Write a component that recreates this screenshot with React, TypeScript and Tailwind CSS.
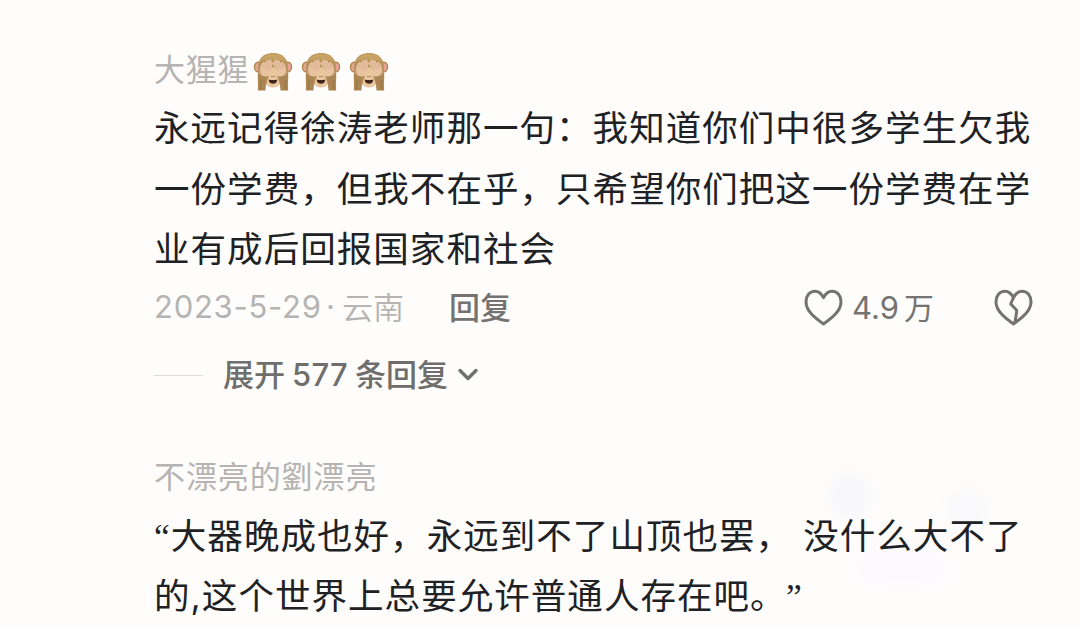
import type { ReactNode } from "react"

function Monkey() {
  return (
    <svg viewBox="0 0 40 40" className="h-10 w-10 shrink-0" aria-label="🙈">
      <ellipse cx="5.200" cy="15" rx="4.400" ry="5.600" fill="#a9824f" />
      <ellipse cx="34.800" cy="15" rx="4.400" ry="5.600" fill="#a9824f" />
      <ellipse cx="5" cy="15.200" rx="2.900" ry="4.100" fill="#e6a593" />
      <ellipse cx="35" cy="15.200" rx="2.900" ry="4.100" fill="#e6a593" />
      <path d="M20 1C10.500 1 5 7 5 15c0 7 4 13 7 16h16c3-3 7-9 7-16C35 7 29.500 1 20 1z" fill="#b8935a" />
      <path d="M20 1.500C13.500 1.500 9 4.500 7 9.500c8-3 18-3 26 0-2-5-6.500-8-13-8z" fill="#c6a267" />
      <path d="M20 15c-5 3-8 8-8 12.500 0 5 3.500 8 8 8s8-3 8-8C28 23 25 18 20 15z" fill="#e9c69e" />
      <path d="M15.700 27.500c2.500.7 6.100.7 8.600 0-.3 3-1.900 4.300-4.300 4.300s-4-1.300-4.300-4.300z" fill="#3f2419" />
      <path d="M18.400 24.500h.9M20.700 24.500h.9" stroke="#a77a55" strokeWidth="1" strokeLinecap="round" />
      <path d="M5 19c1 5 7 7.500 11 4.500-2 4.500-3.300 9-3.500 15H4.800C5.600 33 4.200 26 5 19z" fill="#ab8654" />
      <path d="M35 19c-1 5-7 7.500-11 4.500 2 4.500 3.300 9 3.500 15h7.700C34.400 33 35.800 26 35 19z" fill="#ab8654" />
      <path d="M8 28l-.5 10M32 28l.5 10" stroke="#92703f" strokeWidth=".8" />
      <path d="M7 17.500c0-3 1.500-5.500 3-7 1-.9 2-.2 1.700 1l2-3c.9-1.100 2.300-.5 1.900.8l1.300-1.500c.9-.9 2.100-.1 1.700 1.100l-.3 1.200c1.300-.4 1.900.6 1.500 1.900L16.500 20c-1.300 3.500-3.500 4.500-6 4C8 23.500 7 20.500 7 17.500z" fill="#e8c3a1" />
      <path d="M33 17.500c0-3-1.500-5.500-3-7-1-.9-2-.2-1.700 1l-2-3c-.9-1.100-2.300-.5-1.900.8l-1.300-1.500c-.9-.9-2.100-.1-1.700 1.100l.3 1.200c-1.300-.4-1.900.6-1.500 1.900L23.500 20c1.300 3.500 3.500 4.500 6 4 2.500-.5 3.500-3.500 3.500-6.500z" fill="#e8c3a1" />
      <path d="M11.200 11.500l-1.700 4M15 10l-2.500 6.500M17.900 11l-2.700 6.500M28.800 11.500l1.700 4M25 10l2.500 6.500M22.100 11l2.700 6.500" stroke="#cda180" strokeWidth=".7" strokeLinecap="round" fill="none" />
    </svg>
  )
}

const HEART = "M19.500 8.700C17.500 4.700 14.600 2.200 11 2.200 5.500 2.200 2 6.700 2 12.700c0 9.300 9 16.300 17.500 22.300C28 29 37 22 37 12.700c0-6-3.500-10.500-9-10.500-3.600 0-6.500 2.500-8.500 6.500z"

function Heart({ broken = false }: { broken?: boolean }) {
  return (
    <svg viewBox="0 0 39 38" className="h-[38px] w-[39px] shrink-0" fill="none" stroke="#747371" strokeWidth="3" strokeLinejoin="round">
      <path d={HEART} />
      {broken && <path d="M19.500 8.500l-2.800 6.500 6 6.300c-.2 4.500-1.200 8-2 13" />}
    </svg>
  )
}

function Line({ children }: { children: ReactNode }) {
  return <div className="h-[60.500px] leading-[60.500px]">{children}</div>
}

export default function App() {
  return (
    <main
      lang="zh-CN"
      className="relative h-[626px] w-[1080px] overflow-hidden whitespace-nowrap bg-[#fefdfb] pl-[154px] font-['Inter','Noto_Sans_CJK_SC',sans-serif] text-[#202124]"
    >
      {/* Faint decoration behind the second comment */}
      <div className="absolute left-[828px] top-[472px] h-12 w-11 rounded-full bg-[#f8f8fb] blur-[5px]" />
      <div className="absolute left-[947px] top-[488px] h-11 w-10 rounded-full bg-[#f9f9fb] blur-[5px]" />
      <div className="absolute left-[850px] top-[545px] h-12 w-[105px] rounded-full bg-[#fcfafc] blur-[8px]" />

      <article className="relative pt-[46px]">
        <div className="flex h-[53px] items-center">
          <span className="w-[99px] pb-1 text-[31px] tracking-[0.700px] text-[#b5b4b3]">大猩猩</span>
          <span className="flex gap-2 pb-0.5">
            <Monkey />
            <Monkey />
            <Monkey />
          </span>
        </div>

        <div className="text-[35.500px] tracking-[1.050px]">
          <Line>永远记得徐涛老师那一句：我知道你们中很多学生欠我</Line>
          <Line>一份学费，但我不在乎，只希望你们把这一份学费在学</Line>
          <Line>业有成后回报国家和社会</Line>
        </div>

        <div className="flex h-[54px] items-center text-[31px] text-[#747371]">
          <span className="w-[172px] text-[31px] tracking-[0.750px] text-[#b5b4b3]">2023-5-29</span>
          <span className="w-[16px] text-[#b5b4b3]">·</span>
          <span className="w-[107px] pt-0.5 font-[350] text-[#b5b4b3]">云南</span>
          <button className="w-[355px] pt-0.5 text-left font-medium">回复</button>
          <Heart />
          <span className="ml-[9px] w-[52px] pt-0.5 text-[31px]">4.9</span>
          <span className="w-[90px] pt-0.5 text-[30px]">万</span>
          <Heart broken />
        </div>

        <button className="flex h-[81px] items-center text-[31px] font-medium text-[#6f6e6d]">
          <span className="h-px w-[49px] bg-[#dedddb]" />
          <span className="ml-[20px] w-[69px] text-left">展开</span>
          <span className="w-[63px] text-left tracking-[0.300px]">577</span>
          <span className="w-[101px] text-left">条回复</span>
          <svg viewBox="0 0 24 16" className="h-4 w-6" fill="none" stroke="currentColor" strokeWidth="3.400" strokeLinecap="round" strokeLinejoin="round">
            <path d="M4 3.500l8 8 8-8" />
          </svg>
        </button>
      </article>

      <article className="relative pt-[33px]">
        <div className="flex h-[58px] items-center text-[31px] tracking-[0.900px] text-[#b5b4b3]">不漂亮的劉漂亮</div>
        <div className="text-[35.500px] tracking-[1.050px]">
          <Line>
            <span className="font-['Liberation_Serif',serif]">“</span>大器晚成也好，永远到不了山顶也罢， 没什么大不了
          </Line>
          <Line>
            的,这个世界上总要允许普通人存在吧。<span className="ml-[17px] font-['Liberation_Serif',serif]">”</span>
          </Line>
        </div>
      </article>
    </main>
  )
}
